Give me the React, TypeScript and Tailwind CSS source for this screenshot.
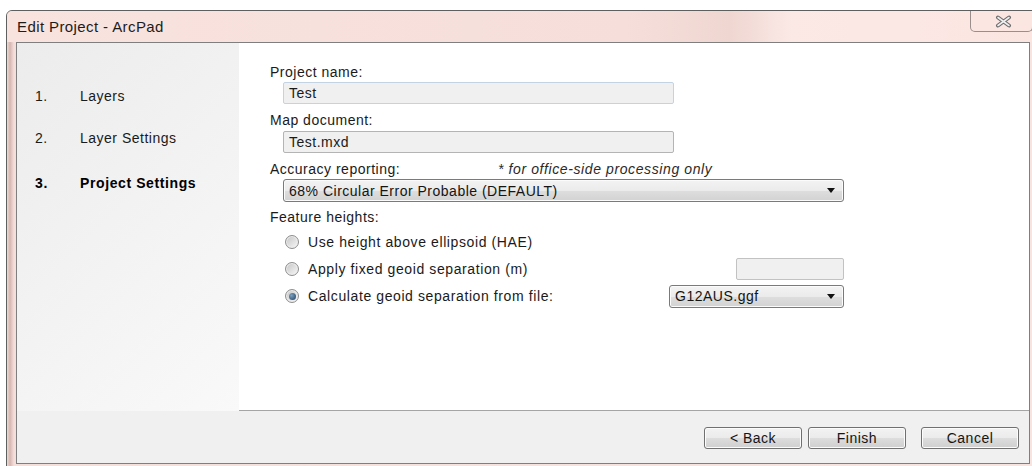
import type { ReactNode } from "react";

const steps = [
  { n: "1.", label: "Layers", gap: "mt-0" },
  { n: "2.", label: "Layer Settings", gap: "mt-[26px]" },
  { n: "3.", label: "Project Settings", gap: "mt-[29px]", active: true },
];

function TextField({ value, className = "", focused = false }: { value?: string; className?: string; focused?: boolean }) {
  return (
    <div
      className={`flex h-[22px] items-center rounded-[2px] border bg-[#f0f0f0] pl-[5px] text-[#1a1a1a] ${
        focused ? "border-[#c3d3e4]" : "border-[#b4b4b4]"
      } ${className}`}
    >
      {value}
    </div>
  );
}

function ComboBox({ value, className = "" }: { value: string; className?: string }) {
  return (
    <div
      className={`flex h-[23px] items-center justify-between rounded-[3px] border border-[#7a7a7a] bg-[linear-gradient(180deg,#f3f3f3_0%,#ebebeb_50%,#dedede_51%,#d2d2d2_100%)] pl-[5px] pr-[8px] text-[#141414] shadow-[inset_0_0_0_1px_#fbfbfb] ${className}`}
    >
      <span>{value}</span>
      <svg width="8" height="5" viewBox="0 0 8 5">
        <path d="M0 0h8L4 5z" fill="#111" />
      </svg>
    </div>
  );
}

function Radio({ checked = false }: { checked?: boolean }) {
  return (
    <div className="ml-[2px] flex h-[14px] w-[14px] items-center justify-center rounded-full border border-[#8e8e8e] bg-[linear-gradient(135deg,#c4c4c4,#f8f8f8)] shadow-[inset_0_0_0_1px_#eeeeee]">
      {checked && (
        <div className="h-[7px] w-[7px] rounded-full bg-[radial-gradient(circle_at_35%_35%,#7e9fc0,#1d3f60)]" />
      )}
    </div>
  );
}

function DialogButton({ children, className = "" }: { children: ReactNode; className?: string }) {
  return (
    <div
      className={`flex h-[22px] w-[98px] items-center justify-center rounded-[3px] border border-[#707070] bg-[linear-gradient(180deg,#f2f2f2_0%,#ebebeb_50%,#dddddd_51%,#cfcfcf_100%)] text-[#151515] shadow-[inset_0_0_0_1px_#fcfcfc] ${className}`}
    >
      {children}
    </div>
  );
}

function RadioRow({ label, checked, children }: { label: string; checked?: boolean; children?: ReactNode }) {
  return (
    <div className="flex h-[22px] items-center justify-between">
      <div className="flex items-center gap-[9px]">
        <Radio checked={checked} />
        <span>{label}</span>
      </div>
      {children}
    </div>
  );
}

export default function App() {
  return (
    <div className="h-[466px] w-[1032px] overflow-hidden bg-white pl-[6px] pt-[10px] font-['Liberation_Sans',Arial,sans-serif] text-[14px] leading-[16px] tracking-[0.5px]">
      <div className="flex h-[470px] w-[1034px] flex-col rounded-tl-[6px] border border-[#5f5f5f] bg-[linear-gradient(90deg,#efd8d3_0px,#d6b6b0_3px,#f4dfdb_7px,#f7e4e0_100%)] px-[9px]">
        {/* title bar */}
        <div className="-mx-[9px] flex h-[31px] items-start justify-between rounded-tl-[5px] bg-[linear-gradient(90deg,#f9e3df_0%,#f6dfdb_60%,#efd6d1_70%,#fbe9e6_76%,#fbe5e1_100%)]">
          <span className="ml-[10px] self-center text-[15px] tracking-[0.4px] text-[#1c1c1c]">Edit Project - ArcPad</span>
          <div className="mr-[6px] flex h-[21px] w-[63px] items-center justify-center rounded-b-[5px] border border-t-0 border-[#9a8d8b] bg-[#fbe6e2] pl-[4px]">
            <svg width="17" height="13" viewBox="0 0 17 13">
              <path d="M3 2.5l11 8M14 2.5L3 10.5" stroke="#6c6c6c" strokeWidth="4" strokeLinecap="round" />
              <path d="M3 2.5l11 8M14 2.5L3 10.5" stroke="#efefef" strokeWidth="1.6" strokeLinecap="round" />
            </svg>
          </div>
        </div>

        {/* dialog body */}
        <div className="flex h-[422px] flex-col border border-[#7f7f7f] bg-[#f0f0f0]">
          <div className="flex h-[368px]">
            <div className="w-[222px] bg-[linear-gradient(135deg,#ececec,#f9f9f9)] pl-[18px] pt-[45px] text-[#1a1a1a]">
              {steps.map((s) => (
                <div key={s.n} className={`flex ${s.gap} ${s.active ? "font-bold tracking-[0.6px] text-black" : ""}`}>
                  <span className="w-[45px]">{s.n}</span>
                  <span>{s.label}</span>
                </div>
              ))}
            </div>

            <div className="flex-1 border-b border-[#a5a5a5] bg-white pl-[31px] pt-[21px] text-[#1a1a1a]">
              <div>Project name:</div>
              <TextField value="Test" focused className="ml-[13px] mt-[2px] w-[391px]" />
              <div className="mt-[8px]">Map document:</div>
              <TextField value="Test.mxd" className="ml-[13px] mt-[3px] w-[391px]" />
              <div className="mt-[8px] flex">
                <span className="w-[228px]">Accuracy reporting:</span>
                <span className="italic tracking-[0.6px] text-[#2a2a2a]">* for office-side processing only</span>
              </div>
              <ComboBox value="68% Circular Error Probable (DEFAULT)" className="ml-[13px] mt-[2px] w-[561px]" />
              <div className="mt-[7px]">Feature heights:</div>
              <div className="ml-[13px] mt-[6px] flex w-[561px] flex-col gap-[5px] tracking-[0.6px]">
                <RadioRow label="Use height above ellipsoid (HAE)" />
                <RadioRow label="Apply fixed geoid separation (m)">
                  <div className="h-[22px] w-[108px] rounded-[2px] border border-[#c2c2c2] bg-[#f0f0f0]" />
                </RadioRow>
                <RadioRow label="Calculate geoid separation from file:" checked>
                  <ComboBox value="G12AUS.ggf" className="h-[22px] w-[175px] tracking-[0.5px]" />
                </RadioRow>
              </div>
            </div>
          </div>

          <div className="flex flex-1 items-start justify-end pr-[10px] pt-[16px]">
            <DialogButton>&lt; Back</DialogButton>
            <DialogButton className="ml-[6px]">Finish</DialogButton>
            <DialogButton className="ml-[15px]">Cancel</DialogButton>
          </div>
        </div>
      </div>
    </div>
  );
}
